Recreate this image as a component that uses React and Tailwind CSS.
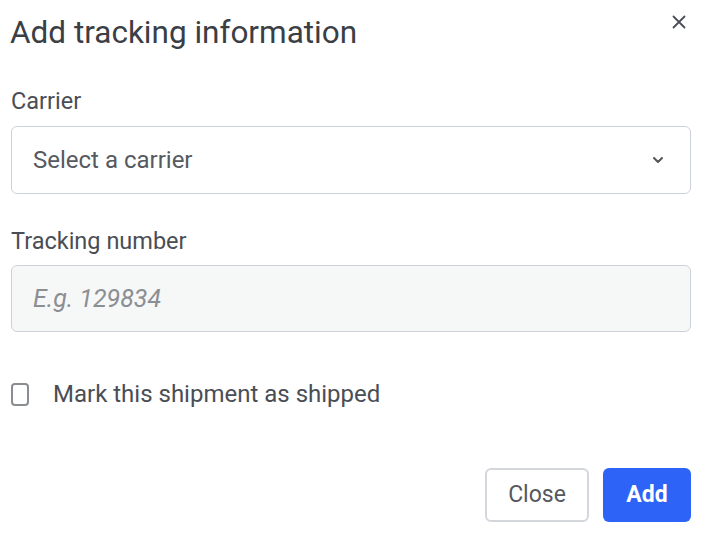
import React from 'react';

export default function App() {
    return (
        <div className="w-[702px] h-[535px] bg-white px-[11px] pt-[13px] font-['Roboto','Liberation_Sans',sans-serif] text-[#44484e]">
            {/* шапка */}
            <div className="flex items-start justify-between">
                <h1 className="text-[31.5px] leading-[40px] text-[#3b3f45] -ml-[1px]">Add tracking information</h1>
                <button className="mt-[1px] mr-[4px] w-[16px] h-[16px] flex items-center justify-center text-[#4a4e54]">
                    <svg width="14" height="14" viewBox="0 0 14 14" fill="none" stroke="currentColor" strokeWidth="1.8" strokeLinecap="round">
                        <path d="M1.5 1.5l11 11M12.5 1.5l-11 11" />
                    </svg>
                </button>
            </div>

            {/* перевозчик */}
            <label className="block mt-[34px] text-[23.5px] leading-[28px] text-[#4a4e54]">Carrier</label>
            <div className="mt-[11px] h-[68px] rounded-[6px] border border-[#cdd2d8] flex items-center justify-between pl-[21px] pr-[26px]">
                <span className="text-[24px] text-[#565a60]">Select a carrier</span>
                <svg width="12" height="8" viewBox="0 0 12 8" fill="none" stroke="#51555b" strokeWidth="2" strokeLinecap="round" strokeLinejoin="round">
                    <path d="M2 2l4 4 4-4" />
                </svg>
            </div>

            {/* трек-номер */}
            <label className="block mt-[33px] text-[23.5px] leading-[28px] text-[#4a4e54]">Tracking number</label>
            <div className="mt-[10px] h-[67px] rounded-[6px] border border-[#cdd2d8] bg-[#f6f7f7] flex items-center pl-[21px]">
                <span className="text-[25px] italic text-[#8b8e93]">E.g. 129834</span>
            </div>

            {/* чекбокс */}
            <div className="mt-[48px] flex items-center gap-[24px]">
                <div className="w-[18px] h-[23px] rounded-[4px] border-2 border-[#8a8d92] bg-white"></div>
                <span className="text-[24px] leading-[28px] text-[#4a4e54]">Mark this shipment as shipped</span>
            </div>

            {/* кнопки */}
            <div className="mt-[60px] flex justify-end gap-[14px]">
                <button className="w-[104px] h-[54px] rounded-[6px] border-2 border-[#d3d7dc] bg-white text-[23px] text-[#55595f]">Close</button>
                <button className="w-[88px] h-[54px] rounded-[6px] bg-[#2d63f6] text-[23px] font-bold text-white">Add</button>
            </div>
        </div>
    );
}
